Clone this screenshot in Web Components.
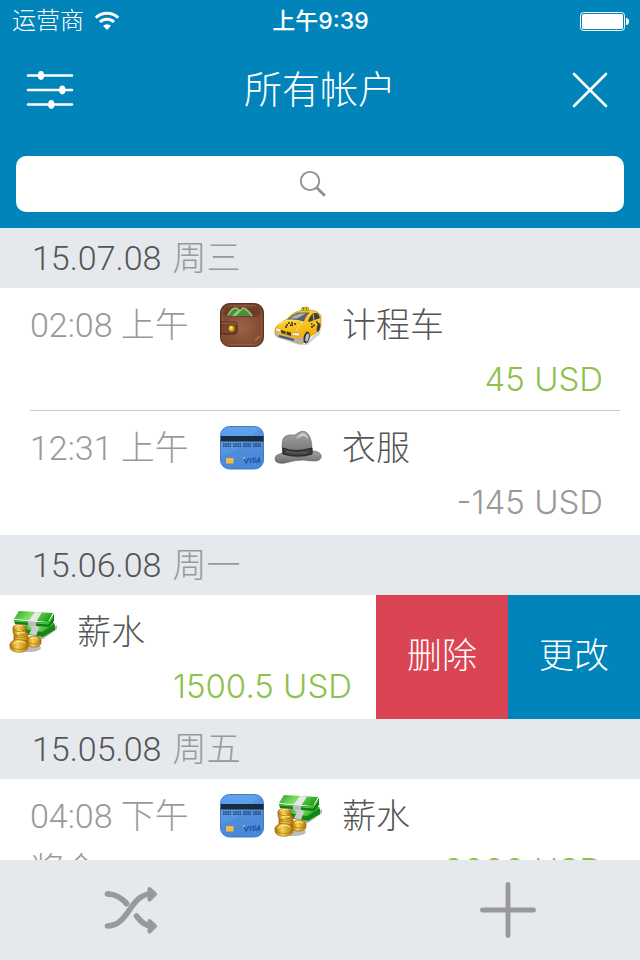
<!DOCTYPE html>
<html lang="zh-CN">
<head>
<meta charset="utf-8">
<meta name="viewport" content="width=device-width, initial-scale=1">
<title>所有帐户</title>
<style>
    html, body {
        margin: 0;
        height: 100%;
    }
    body {
        --blue: #0084b9;
        --red: #db4453;
        --green: #8cc14c;
        --band: #e5e8ed;
        --dark: #555;
        --muted: #999;
        --figures: Inter, "Noto Sans CJK SC", sans-serif;
        font: 300 34px/54px Roboto, "Noto Sans CJK SC", sans-serif;
        color: var(--dark);
        background: #fff;
    }
</style>
</head>
<body>

<account-app></account-app>

<template id="status-bar">
<style>
    :host {
        display: grid;
        grid-template-columns: 1fr auto 1fr;
        align-items: center;
        height: 40px;
        padding: 0 11px 0 12px;
        font-size: 24px;
        line-height: 42px;
        color: #fff;
    }
    .carrier {
        display: flex;
        align-items: center;
        gap: 10px;
    }
    .time {
        font-family: var(--figures);
        font-size: 23px;
        font-weight: 500;
    }
    .battery {
        justify-self: end;
    }
</style>
<span class="carrier"><slot name="carrier"></slot><x-icon name="wifi"></x-icon></span>
<span class="time"><slot name="time"></slot></span>
<x-icon class="battery" name="battery"></x-icon>
</template>

<template id="nav-bar">
<style>
    :host {
        display: flex;
        align-items: center;
        justify-content: space-between;
        height: 100px;
        padding: 0 26px;
        box-sizing: border-box;
        color: #fff;
    }
    h1 {
        margin: 0;
        font-size: 38px;
        font-weight: 300;
    }
    button {
        display: flex;
        border: 0;
        padding: 0;
        background: none;
        color: inherit;
    }
</style>
<button aria-label="筛选"><x-icon name="sliders"></x-icon></button>
<h1><slot></slot></h1>
<button aria-label="关闭"><x-icon name="close"></x-icon></button>
</template>

<template id="search-field">
<style>
    :host {
        display: block;
        padding: 16px;
    }
    label {
        display: grid;
        align-items: center;
        justify-items: center;
        color: #8e8e93;
    }
    label > * {
        grid-area: 1 / 1;
    }
    input {
        width: 100%;
        height: 56px;
        box-sizing: border-box;
        border: 0;
        border-radius: 10px;
        padding: 0 24px;
        font: inherit;
        font-size: 28px;
        background: #fff;
        appearance: none;
    }
    x-icon {
        pointer-events: none;
        padding-right: 14px;
    }
    input:focus + x-icon {
        visibility: hidden;
    }
</style>
<label>
    <input type="search" aria-label="搜索">
    <x-icon name="search"></x-icon>
</label>
</template>

<template id="day-group">
<style>
    :host {
        display: block;
    }
    h2 {
        display: flex;
        gap: 11px;
        margin: 0;
        padding: 0 32px;
        font-size: 34px;
        font-weight: 300;
        line-height: 60px;
        background: var(--band);
    }
    .weekday {
        color: var(--muted);
    }
</style>
<h2><span class="date"></span><span class="weekday"></span></h2>
<slot></slot>
</template>

<template id="entry-row">
<style>
    :host {
        display: flex;
        background: #fff;
    }
    .body {
        flex: 1;
        min-width: 0;
        padding: 10px 37px 6px 30px;
    }
    :host([divided]) .body {
        position: relative;
        padding-bottom: 5px;
    }
    :host([divided]) .body::after {
        content: "";
        position: absolute;
        left: 30px;
        right: 20px;
        bottom: 0;
        height: 1px;
        background: #c8c7cc;
    }
    .head {
        display: grid;
        grid-template-columns: 180px 44px 48px 1fr;
        column-gap: 10px;
        align-items: center;
    }
    .label {
        padding-left: 10px;
    }
    .foot {
        display: flex;
        justify-content: space-between;
    }
    .time, .foot {
        color: var(--muted);
    }
    .amount {
        font-family: var(--figures);
        font-size: 33px;
    }
    :host([income]) .amount {
        color: var(--green);
    }
    .actions {
        display: none;
    }
    :host([open]) .actions {
        display: flex;
    }
    :host([open]) .body {
        padding-left: 9px;
        padding-right: 24px;
    }
    :host([open]) .head {
        grid-template-columns: 48px 1fr;
    }
    :host([open]) :is(.time, .account) {
        display: none;
    }
    button {
        width: 132px;
        border: 0;
        padding: 0;
        font: inherit;
        font-size: 35px;
        color: #fff;
        background: var(--blue);
    }
    .delete {
        background: var(--red);
    }
</style>
<div class="body">
    <div class="head">
        <span class="time"></span>
        <x-icon class="account"></x-icon>
        <x-icon class="category"></x-icon>
        <span class="label"><slot></slot></span>
    </div>
    <div class="foot"><span class="note"></span><span class="amount"></span></div>
</div>
<div class="actions">
    <button class="delete">删除</button>
    <button class="edit">更改</button>
</div>
</template>

<template id="tool-bar">
<style>
    :host {
        display: flex;
        align-items: center;
        justify-content: space-between;
        height: 100px;
        padding: 0 104px;
        background: var(--band);
        color: var(--muted);
    }
    button {
        display: flex;
        border: 0;
        padding: 0;
        background: none;
        color: inherit;
    }
</style>
<button aria-label="转账"><x-icon name="shuffle"></x-icon></button>
<button aria-label="添加"><x-icon name="plus"></x-icon></button>
</template>

<template id="account-app">
<style>
    :host {
        display: flex;
        flex-direction: column;
        height: 100vh;
    }
    header {
        background: var(--blue);
    }
    main {
        flex: 1;
        min-height: 0;
        overflow-y: auto;
        scrollbar-width: none;
    }
</style>
<header>
    <status-bar><span slot="carrier">运营商</span><span slot="time">上午9:39</span></status-bar>
    <nav-bar>所有帐户</nav-bar>
    <search-field></search-field>
</header>
<main>
    <day-group date="15.07.08" weekday="周三">
        <entry-row time="02:08 上午" account="wallet" category="taxi" amount="45 USD" income divided>计程车</entry-row>
        <entry-row time="12:31 上午" account="card" category="hat" amount="-145 USD">衣服</entry-row>
    </day-group>
    <day-group date="15.06.08" weekday="周一">
        <entry-row category="money" amount="1500.5 USD" income open>薪水</entry-row>
    </day-group>
    <day-group date="15.05.08" weekday="周五">
        <entry-row time="04:08 下午" account="card" category="money" note="奖金" amount="2000 USD" income>薪水</entry-row>
    </day-group>
</main>
<tool-bar></tool-bar>
</template>

<script>
const ICONS = {
    wifi: `<svg width="26" height="20" viewBox="0 0 26 20" fill="none" stroke="currentColor" stroke-width="3">
        <path d="M1.8 6.7a16 16 0 0 1 22.4 0M6 11a10 10 0 0 1 14 0"/>
        <path d="M13 19l-4-4.2a6 6 0 0 1 8 0z" fill="currentColor" stroke="none"/></svg>`,

    battery: `<svg width="49" height="20" viewBox="0 0 49 20" fill="currentColor">
        <rect x=".5" y="1.5" width="44" height="18" rx="3" fill="none" stroke="currentColor"/>
        <rect x="2" y="3" width="41" height="15" rx="1.5"/>
        <path d="M46 7c4 0 4 7 0 7z"/></svg>`,

    sliders: `<svg width="48" height="40" viewBox="0 0 48 40" fill="currentColor" stroke="currentColor" stroke-width="2.6" stroke-linecap="round">
        <path d="M2 5.5h44M2 20h44M2 34.5h44"/>
        <g stroke="none"><ellipse cx="15" cy="5.5" rx="3.1" ry="4.4"/><ellipse cx="36.3" cy="20" rx="3.1" ry="4.4"/><ellipse cx="25.3" cy="34.5" rx="3.1" ry="4.4"/></g></svg>`,

    close: `<svg width="48" height="40" viewBox="0 0 48 40" fill="none" stroke="currentColor" stroke-width="2.6" stroke-linecap="round">
        <path d="M8 4l32 32M40 4L8 36"/></svg>`,

    search: `<svg width="28" height="28" viewBox="0 0 28 28" fill="none" stroke="currentColor">
        <circle cx="11" cy="11" r="9.2" stroke-width="1.8"/><path d="M17.8 17.8l8 8" stroke-width="2.8"/></svg>`,

    shuffle: `<svg width="54" height="50" viewBox="0 0 54 50" fill="none" stroke="currentColor" stroke-width="5.6" stroke-linecap="round">
        <path d="M3.5 41C25 41 26 9 47 9"/>
        <path d="M3.5 9C12 9 18 13 23.5 19.5" stroke-linecap="butt"/><path d="M3.5 9h1M22 18l.5.7"/>
        <path d="M32.5 31C37 37 41 41 47 41"/>
        <path d="M45.5 4l5.5 5-5.5 5.5zM45.5 36l5.5 5-5.5 5.5z" fill="currentColor" stroke-width="4" stroke-linejoin="round"/></svg>`,

    plus: `<svg width="56" height="56" viewBox="0 0 56 56" fill="none" stroke="currentColor" stroke-width="4.8" stroke-linecap="round">
        <path d="M28 2.4v51.2M2.4 28h51.2"/></svg>`,

    wallet: `<svg width="44" height="44" viewBox="0 0 44 44">
        <defs><radialGradient id="leather" cx=".5" cy=".55" r=".75"><stop offset="0" stop-color="#9a6247"/><stop offset=".65" stop-color="#81492f"/><stop offset="1" stop-color="#4f2a18"/></radialGradient></defs>
        <rect x=".5" y=".5" width="43" height="43" rx="9" fill="url(#leather)" stroke="#5a3321"/>
        <rect x="2.5" y="2.5" width="39" height="39" rx="7.5" fill="none" stroke="#b88567" stroke-dasharray="2 1" opacity=".45"/>
        <path d="M4 9Q5 5 10 5h24q5 0 6 4-1 4-5 5H10Q5 13 4 9z" fill="#6d3c27"/>
        <path d="M7 13q4-8 8-8 3-1 5 2 3-3 6-2 4 3 7 8z" fill="#4f8c39"/>
        <path d="M8 12q4-7 8-7l3 2-6 6M15 13l8-8q4 1 9 8" fill="none" stroke="#8fc877" stroke-width="1.5"/>
        <path d="M1 19h13q3 0 3 3v6q0 3-3 3H1z" fill="#7b452d" stroke="#4c2919"/>
        <path d="M2 20h12q2 0 2 2" fill="none" stroke="#ad775a" opacity=".7"/>
        <circle cx="11.5" cy="25.5" r="2.9" fill="#e5c60c" stroke="#8d6511" stroke-width=".6"/><circle cx="11" cy="24.5" r="1.2" fill="#fff26c"/>
        <path d="M35 38l5-5" stroke="#b98a70" stroke-width="2" opacity=".5"/></svg>`,

    taxi: `<svg width="48" height="44" viewBox="0 0 48 44">
        <defs><linearGradient id="paint" x2=".3" y2="1"><stop offset="0" stop-color="#ffe04a"/><stop offset="1" stop-color="#f2a900"/></linearGradient></defs>
        <path d="M3 34l28 7 12-12 4-9-1 11-13 11-8 0z" fill="#777" opacity=".35"/>
        <path d="M1 28q0-4 4-7l8-5q6-7 12-8 10-2 16 0 4 1 6 5l0 8q0 5-4 8l-6 4-5 6q-4 2-8 1L5 34q-5-1-4-6z" fill="url(#paint)" stroke="#b98105" stroke-width=".6"/>
        <path d="M13 16.5q5-5 11-7l12 0q-4 3-6 9l-1 0q-8-2-16-2z" fill="#5a6268"/>
        <path d="M16 15.5q5-4 10-5l6 0-9 5z" fill="#a9b4ba"/>
        <path d="M34 18q2-5 5-8l4 0q3 2 3 5l-11 4z" fill="#3c4144"/>
        <path d="M39 10l1 8" stroke="#f6bd16"/>
        <path d="M27 7.5l1-3 5-.5 2 1-1 3z" fill="#ffd51c" stroke="#8a6d18" stroke-width=".6"/><path d="M29 5.8h1.2M31.8 5.8H33" stroke="#222" stroke-width="1.3"/>
        <path d="M4 22q8-5 13-5 8 0 12 2-5 4-7 9" fill="none" stroke="#fff08a" opacity=".8"/>
        <path d="M14 20h2M12 22h2M17 20h2M16 22.3h3M20 21h2M11 24h2" stroke="#33300f" stroke-width="1.4"/>
        <path d="M37 21h1.5M39 22.5h2M42 19h1.5M43 20.5h2M37 24h2" stroke="#33300f" stroke-width="1.5"/>
        <path d="M2 25l5 1-1 3-4-1zM18 30l8 0-1 3-7-1z" fill="#fff9dc" stroke="#988244" stroke-width=".4"/>
        <path d="M7 27l10 2.5v3.5L7 30z" fill="#4a3f20"/><path d="M12 28v4" stroke="#f0b819"/>
        <path d="M1 30l24 6 5-2v4q-2 3-6 2L5 35q-4-1-4-5z" fill="#adb2b5"/><path d="M5 33l15 4" stroke="#54585b" stroke-width="2"/>
        <ellipse cx="32.5" cy="34.5" rx="3" ry="6" fill="#33373a" transform="rotate(12 32.5 35)"/><ellipse cx="33" cy="34.5" rx="1.6" ry="4.2" fill="#bfc5c9" transform="rotate(12 33 35)"/>
        <ellipse cx="44.5" cy="24.5" rx="1.6" ry="4.3" fill="#3b3f42" transform="rotate(12 44.5 24.5)"/></svg>`,

    card: `<svg width="44" height="44" viewBox="0 0 44 44">
        <defs><linearGradient id="plastic" x2="0" y2="1"><stop offset="0" stop-color="#62a1ea"/><stop offset="1" stop-color="#4c8ddd"/></linearGradient></defs>
        <rect x=".5" y=".5" width="43" height="42.5" rx="9" fill="url(#plastic)" stroke="#3d7bc8"/>
        <path d="M1 30q15-4 25-14L40 2q3 3 3 7v24q0 9-9 9.5H11q-9-.5-10-9z" fill="#3c79c7" opacity=".28"/>
        <rect x="1" y="10" width="42.5" height="5.5" fill="#172b43"/>
        <path d="M3 18h8M13 18h8M23 18h8M33 18h8M3 20.2h8M13 20.2h8M23 20.2h8M33 20.2h8" stroke="#254a78" stroke-width="1.5" stroke-dasharray="1.7 .5"/>
        <rect x="6" y="32" width="7.5" height="5.5" fill="#f5b94a"/>
        <g fill="none" stroke="#245cab" stroke-width="1.5"><path d="M24 32l2 5 3-5M31 32l-1 5M36 32.5q-3-1-3 .8l2 1.5q0 2-3 1.5M36 37l3-5 1 5M37 35.5h3"/></g>
        <path d="M23 32h2" stroke="#eeb24b" stroke-width="1.4"/></svg>`,

    hat: `<svg width="48" height="44" viewBox="0 0 48 44">
        <defs><linearGradient id="felt" x2="0" y2="1"><stop offset="0" stop-color="#a4a4a4"/><stop offset="1" stop-color="#6c6c6c"/></linearGradient></defs>
        <path d="M1 33q0-4 5-5l5-3h27q7 0 9 4 1 5-5 6-6 0-12-1-9 0-15 2-6 2-10 1-4-1-4-4z" fill="url(#felt)" stroke="#555" stroke-width=".6"/>
        <path d="M9 28q-2-8 0-15 2-4 7-4 5 1 8-2 6-4 10 1 4 5 4 17v3q-13 6-29 0z" fill="url(#felt)" stroke="#555" stroke-width=".6"/>
        <path d="M9 22q12 5 29 0v6q-14 4-29 0z" fill="#3f3f3f" stroke="#252525"/>
        <path d="M12 25.5q10 3 21 1" fill="none" stroke="#666"/>
        <path d="M22 13q2-5 7-6 5 1 5 7-2-4-5-4-3 1-7 3z" fill="#dedede" opacity=".7"/></svg>`,

    money: `<svg width="48" height="44" viewBox="0 0 48 44">
        <defs><linearGradient id="note" x2="1" y2=".3"><stop offset="0" stop-color="#2aa32a"/><stop offset=".5" stop-color="#7fe060"/><stop offset="1" stop-color="#24a51f"/></linearGradient>
        <linearGradient id="gold" x2="1"><stop offset="0" stop-color="#b67909"/><stop offset=".4" stop-color="#f7d353"/><stop offset="1" stop-color="#b37a0a"/></linearGradient></defs>
        <path d="M16 28l18-2 14-11v4L34 29l-15 2z" fill="#666" opacity=".5"/>
        <path d="M17 15l25-3 4 3v5L34 27l-19-3z" fill="#138614"/><path d="M17 14l25-3 4 3-13 8-18-3z" fill="url(#note)"/>
        <path d="M18 15l8-1 4 4-3 8-7-2 3-6z" fill="#ccc"/>
        <path d="M5 10l34 3 6-9v7l-5 6-34-3z" fill="#117d16"/><path d="M10 1l34 2-5 9L5 9z" fill="url(#note)"/>
        <path d="M6 11l33 3 5-7" fill="none" stroke="#56cf48"/>
        <path d="M26 2l7 .5-6 9.5v4l-8-1v-4z" fill="#e7e7e7"/><path d="M19 11l8 1v4l-8-1z" fill="#bbb"/>
        <ellipse cx="20" cy="38" rx="12" ry="4" fill="#555" opacity=".4"/>
        <g fill="url(#gold)" stroke="#986307" stroke-width=".6">
        <path d="M5 28v4c0 5 13 5 13 0v-4z"/><ellipse cx="11.5" cy="28" rx="6.5" ry="3.5"/>
        <path d="M5 24v4c0 5 14 5 14 0v-4z"/><ellipse cx="12" cy="24" rx="7" ry="3.6"/>
        <path d="M4 18v4c0 5 13 5 13 0v-4z"/><ellipse cx="10.5" cy="18" rx="6.7" ry="3.6"/>
        <path d="M18 30v3c0 6 14 5 14 0v-3z"/><ellipse cx="25" cy="30" rx="7" ry="4"/>
        <path d="M1 34v3c0 7 18 7 18 0v-3z"/><ellipse cx="10" cy="34.5" rx="9" ry="5"/></g>
        <g fill="none" stroke="#ffeb91"><path d="M6 17q4-3 8-1M8 23q4-2 8 0M21 29q4-3 8 0M4 34q6-5 12-1"/></g></svg>`
};

const clone = (id) => document.getElementById(id).content.cloneNode(true);

class IconElement extends HTMLElement {
    static observedAttributes = ["name"];

    constructor() {
        super();
        this.attachShadow({ mode: "open" });
    }

    attributeChangedCallback() {
        const svg = ICONS[this.getAttribute("name")] ?? "";
        this.shadowRoot.innerHTML = `<style>:host { display: inline-flex; } svg { display: block; }</style>${svg}`;
    }
}

class TemplateElement extends HTMLElement {
    constructor() {
        super();
        this.attachShadow({ mode: "open" });
        this.shadowRoot.append(clone(this.localName));
    }

    // copies an attribute of the host into the part with the same class
    fill(...names) {
        for (const name of names) {
            this.shadowRoot.querySelector("." + name).textContent = this.getAttribute(name) ?? "";
        }
    }
}

class DayGroupElement extends TemplateElement {
    connectedCallback() {
        this.fill("date", "weekday");
    }
}

class EntryRowElement extends TemplateElement {
    connectedCallback() {
        this.fill("time", "note", "amount");
        for (const name of ["account", "category"]) {
            this.shadowRoot.querySelector("." + name).setAttribute("name", this.getAttribute(name) ?? "");
        }
    }
}

customElements.define("x-icon", IconElement);
customElements.define("status-bar", class extends TemplateElement {});
customElements.define("nav-bar", class extends TemplateElement {});
customElements.define("search-field", class extends TemplateElement {});
customElements.define("day-group", DayGroupElement);
customElements.define("entry-row", EntryRowElement);
customElements.define("tool-bar", class extends TemplateElement {});
customElements.define("account-app", class extends TemplateElement {});
</script>
</body>
</html>
